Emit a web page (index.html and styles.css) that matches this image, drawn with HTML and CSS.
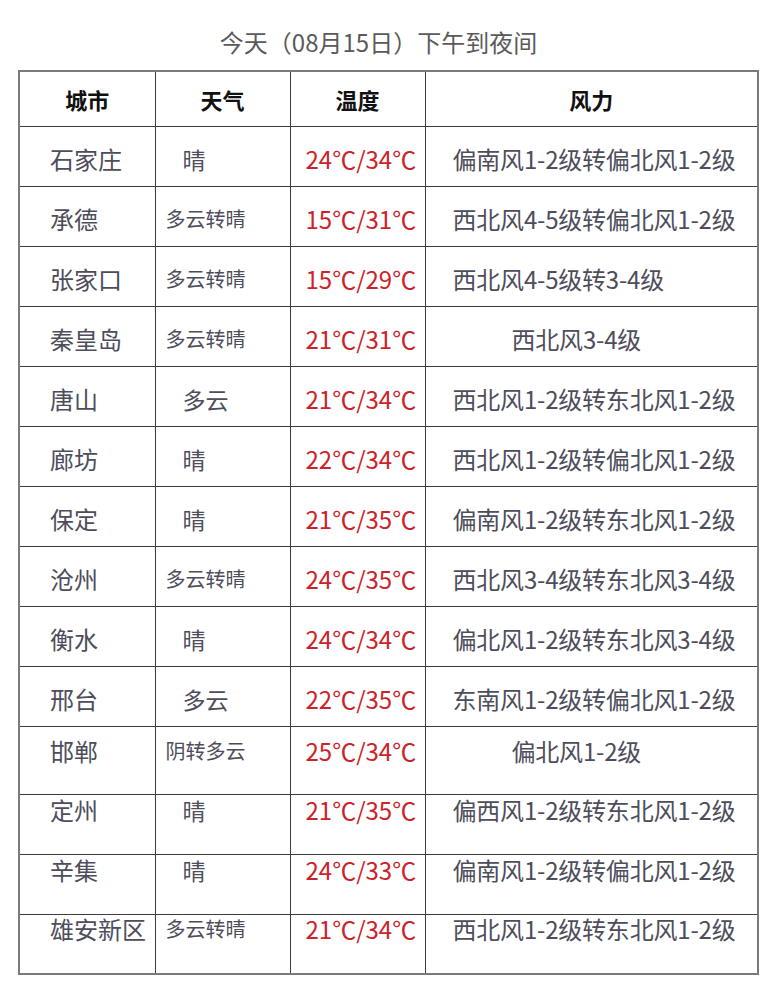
FILE: index.html
```html
<!DOCTYPE html>
<html lang="zh-CN">
<head>
<meta charset="utf-8">
<title>今天（08月15日）下午到夜间</title>
<link rel="stylesheet" href="styles.css">
</head>
<body>
<div class="page">
  <div class="title">今天（08月15日）下午到夜间</div>
  <table class="forecast">
    <colgroup>
      <col class="c-city">
      <col class="c-wx">
      <col class="c-temp">
      <col class="c-wind">
    </colgroup>
    <thead>
      <tr class="head">
        <th>城市</th><th>天气</th><th>温度</th><th>风力</th>
      </tr>
    </thead>
    <tbody>
      <tr class="mid"><td class="city">石家庄</td><td class="wx big">晴</td><td class="temp">24℃/34℃</td><td class="wind">偏南风1-2级转偏北风1-2级</td></tr>
      <tr class="mid"><td class="city">承德</td><td class="wx">多云转晴</td><td class="temp">15℃/31℃</td><td class="wind">西北风4-5级转偏北风1-2级</td></tr>
      <tr class="mid"><td class="city">张家口</td><td class="wx">多云转晴</td><td class="temp">15℃/29℃</td><td class="wind">西北风4-5级转3-4级</td></tr>
      <tr class="mid"><td class="city">秦皇岛</td><td class="wx">多云转晴</td><td class="temp">21℃/31℃</td><td class="wind indent">西北风3-4级</td></tr>
      <tr class="mid"><td class="city">唐山</td><td class="wx big">多云</td><td class="temp">21℃/34℃</td><td class="wind">西北风1-2级转东北风1-2级</td></tr>
      <tr class="mid"><td class="city">廊坊</td><td class="wx big">晴</td><td class="temp">22℃/34℃</td><td class="wind">西北风1-2级转偏北风1-2级</td></tr>
      <tr class="mid"><td class="city">保定</td><td class="wx big">晴</td><td class="temp">21℃/35℃</td><td class="wind">偏南风1-2级转东北风1-2级</td></tr>
      <tr class="mid"><td class="city">沧州</td><td class="wx">多云转晴</td><td class="temp">24℃/35℃</td><td class="wind">西北风3-4级转东北风3-4级</td></tr>
      <tr class="mid"><td class="city">衡水</td><td class="wx big">晴</td><td class="temp">24℃/34℃</td><td class="wind">偏北风1-2级转东北风3-4级</td></tr>
      <tr class="mid"><td class="city">邢台</td><td class="wx big">多云</td><td class="temp">22℃/35℃</td><td class="wind">东南风1-2级转偏北风1-2级</td></tr>
      <tr class="tall"><td class="city">邯郸</td><td class="wx">阴转多云</td><td class="temp">25℃/34℃</td><td class="wind indent">偏北风1-2级</td></tr>
      <tr class="top"><td class="city">定州</td><td class="wx big">晴</td><td class="temp">21℃/35℃</td><td class="wind">偏西风1-2级转东北风1-2级</td></tr>
      <tr class="top"><td class="city">辛集</td><td class="wx big">晴</td><td class="temp">24℃/33℃</td><td class="wind">偏南风1-2级转偏北风1-2级</td></tr>
      <tr class="top last"><td class="city">雄安新区</td><td class="wx">多云转晴</td><td class="temp">21℃/34℃</td><td class="wind">西北风1-2级转东北风1-2级</td></tr>
    </tbody>
  </table>
</div>
</body>
</html>
```
FILE: styles.css
```css
html, body {
  margin: 0;
  padding: 0;
  background: #ffffff;
}

body {
  font-family: "Noto Sans CJK SC", "Noto Sans", sans-serif;
  color: #4d4d5b;
}

.page {
  width: 757px;
  padding-top: 27px;
}

.title {
  text-align: center;
  font-size: 24px;
  line-height: 30px;
  color: #5a5a5a;
  margin-bottom: 13px;
}

.forecast {
  margin-left: 18px;
  width: 739px;
  table-layout: fixed;
  border-collapse: collapse;
  border: 2px solid #7a7a7a;
}

.c-city { width: 136px; }
.c-wx { width: 135px; }
.c-temp { width: 135px; }
.c-wind { width: 333px; }

.forecast th,
.forecast td {
  border: 1px solid #3c3c3c;
  padding: 0;
  white-space: nowrap;
  line-height: 28px;
}

.head {
  height: 55px;
}

.head th {
  font-weight: 700;
  font-size: 22px;
  color: #111111;
  text-align: center;
  vertical-align: middle;
}

.mid { height: 60px; }
.mid td {
  vertical-align: middle;
  padding-top: 5px;
}

.tall { height: 68px; }
.tall td {
  vertical-align: top;
  padding-top: 10px;
}

.top { height: 60px; }
.top td {
  vertical-align: top;
  line-height: 24px;
  padding-top: 3px;
}

.top.last td {
  padding-top: 2px;
}

.city {
  font-size: 24px;
  padding-left: 30px !important;
  text-align: left;
}

.wx {
  font-size: 20px;
  padding-left: 10px !important;
  text-align: left;
}

.wx.big {
  font-size: 23px;
  padding-left: 27px !important;
}

.temp {
  font-size: 24px;
  color: #cc2229;
  padding-left: 15px !important;
  text-align: left;
}

.wind {
  font-size: 24px;
  letter-spacing: -0.2px;
  padding-left: 27px !important;
  text-align: left;
}

.wind.indent {
  padding-left: 86px !important;
}
```
